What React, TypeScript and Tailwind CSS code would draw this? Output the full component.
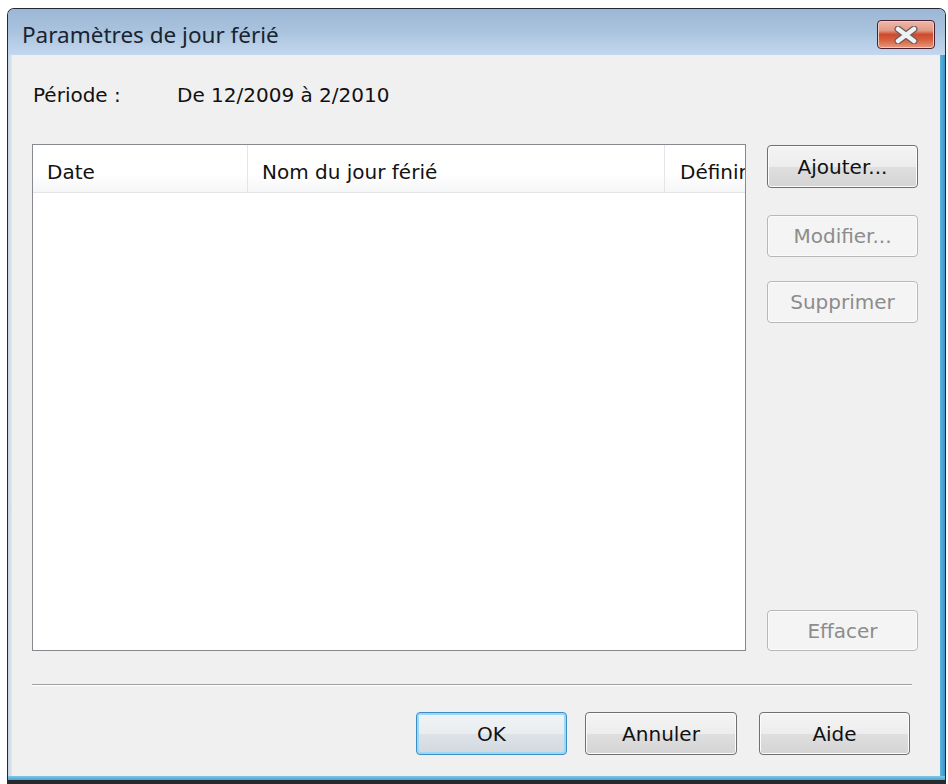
import React from "react";

function Btn({
  label,
  disabled,
  primary,
  className = "",
}: {
  label: string;
  disabled?: boolean;
  primary?: boolean;
  className?: string;
}) {
  if (disabled) {
    return (
      <div
        className={
          "flex items-center justify-center rounded-[4px] border border-[#b5b9bc] bg-[#f4f4f4] text-[20px] text-[#8c8c8c] shadow-[inset_0_0_0_1px_#fbfbfb] " +
          className
        }
      >
        {label}
      </div>
    );
  }
  if (primary) {
    return (
      <div
        className={
          "flex items-center justify-center rounded-[4px] border border-[#3d8dc4] bg-[linear-gradient(to_bottom,#f1f4f6_0%,#e9edf0_50%,#dde3e7_51%,#d2d9de_100%)] text-[20px] text-[#111] shadow-[inset_0_0_0_2px_#9ad9f5] " +
          className
        }
      >
        {label}
      </div>
    );
  }
  return (
    <div
      className={
        "flex items-center justify-center rounded-[4px] border border-[#707070] bg-[linear-gradient(to_bottom,#f4f4f4_0%,#ededed_50%,#dfdfdf_51%,#d4d4d4_100%)] text-[20px] text-[#111] shadow-[inset_0_0_0_1px_#fcfcfc] " +
        className
      }
    >
      {label}
    </div>
  );
}

function CloseButton() {
  return (
    <div className="mt-[11px] flex h-[29px] w-[58px] items-center justify-center rounded-[4px] border border-[#4a2030] bg-[linear-gradient(to_bottom,#ecb9ab_0%,#e39a86_35%,#cc4a2e_50%,#d6613f_70%,#e89a80_100%)] shadow-[inset_0_0_0_1px_#f3c9bd]">
      <svg width="26" height="18" viewBox="0 0 26 18">
        <path
          d="M5 3 L21 15 M21 3 L5 15"
          stroke="#6b5a5e"
          strokeWidth="7"
          strokeLinecap="round"
          fill="none"
        />
        <path
          d="M5 3 L21 15 M21 3 L5 15"
          stroke="#eef2f2"
          strokeWidth="4.5"
          strokeLinecap="round"
          fill="none"
        />
      </svg>
    </div>
  );
}

export default function App() {
  return (
    <div className="h-[784px] w-[948px] overflow-hidden bg-white font-['DejaVu_Sans',sans-serif]">
      <div className="ml-[7px] mt-[8px] flex h-[776px] w-[939px] flex-col overflow-hidden rounded-t-[7px] border border-b-[4px] border-[#262a2e] bg-[#c9d9ea]">
        {/* Title bar */}
        <div className="flex h-[46px] shrink-0 items-start bg-[linear-gradient(to_bottom,#9cb7d6_0%,#aac3de_50%,#c3d8ee_100%)] pl-[14px] pr-[10px]">
          <div className="mt-[12px] font-['Noto_Sans',sans-serif] text-[22.5px] leading-[28px] text-[#1a2330]">
            Paramètres de jour férié
          </div>
          <div className="ml-auto">
            <CloseButton />
          </div>
        </div>

        {/* Body with side frames */}
        <div className="flex min-h-0 flex-1">
          <div className="w-[4px] shrink-0 bg-[linear-gradient(to_right,#c6d4e3,#dde7f1)]" />
          <div className="flex w-[928px] shrink-0 flex-col bg-[#f0f0f0]">
            {/* Période */}
            <div className="mt-[28px] flex h-[24px] items-center pl-[21px] text-[20px] text-[#111]">
              <div className="w-[144px]">Période :</div>
              <div>De 12/2009 à 2/2010</div>
            </div>

            {/* List + buttons */}
            <div className="mt-[37px] flex h-[507px] pl-[20px]">
              <div className="flex h-full w-[714px] flex-col overflow-hidden border border-[#868a8e] bg-white">
                <div className="flex h-[48px] shrink-0 border-b border-[#e2e4e6] bg-[linear-gradient(to_bottom,#ffffff_0%,#ffffff_60%,#f5f6f7_100%)] text-[20px] text-[#111]">
                  <div className="flex w-[215px] shrink-0 items-center border-r border-[#e3e5e7] pl-[14px] pt-[6px]">
                    Date
                  </div>
                  <div className="flex w-[417px] shrink-0 items-center border-r border-[#e3e5e7] pl-[14px] pt-[6px]">
                    Nom du jour férié
                  </div>
                  <div className="flex w-[200px] shrink-0 items-center whitespace-nowrap pl-[15px] pt-[6px]">
                    Définir
                  </div>
                </div>
                <div className="flex-1 bg-white" />
              </div>

              <div className="ml-[21px] flex h-full w-[151px] flex-col">
                <Btn label="Ajouter..." className="mt-[1px] h-[43px]" />
                <Btn label="Modifier..." disabled className="mt-[27px] h-[42px]" />
                <Btn label="Supprimer" disabled className="mt-[24px] h-[42px]" />
                <Btn label="Effacer" disabled className="mt-auto h-[41px]" />
              </div>
            </div>

            {/* Separator */}
            <div className="ml-[20px] mt-[33px] h-[2px] w-[880px] border-b border-t border-b-white border-t-[#a0a0a0]" />

            {/* Bottom buttons */}
            <div className="mt-[26px] flex justify-end pr-[30px]">
              <Btn label="OK" primary className="h-[43px] w-[151px]" />
              <Btn label="Annuler" className="ml-[18px] h-[43px] w-[152px]" />
              <Btn label="Aide" className="ml-[22px] h-[43px] w-[151px]" />
            </div>
          </div>
          <div className="w-[5px] shrink-0 bg-[linear-gradient(to_right,#5db3dc,#3e93c6)]" />
        </div>

        {/* Bottom frame */}
        <div className="h-[4px] shrink-0 bg-[linear-gradient(to_bottom,#7fc7e6,#49a6d4)]" />
      </div>
    </div>
  );
}
